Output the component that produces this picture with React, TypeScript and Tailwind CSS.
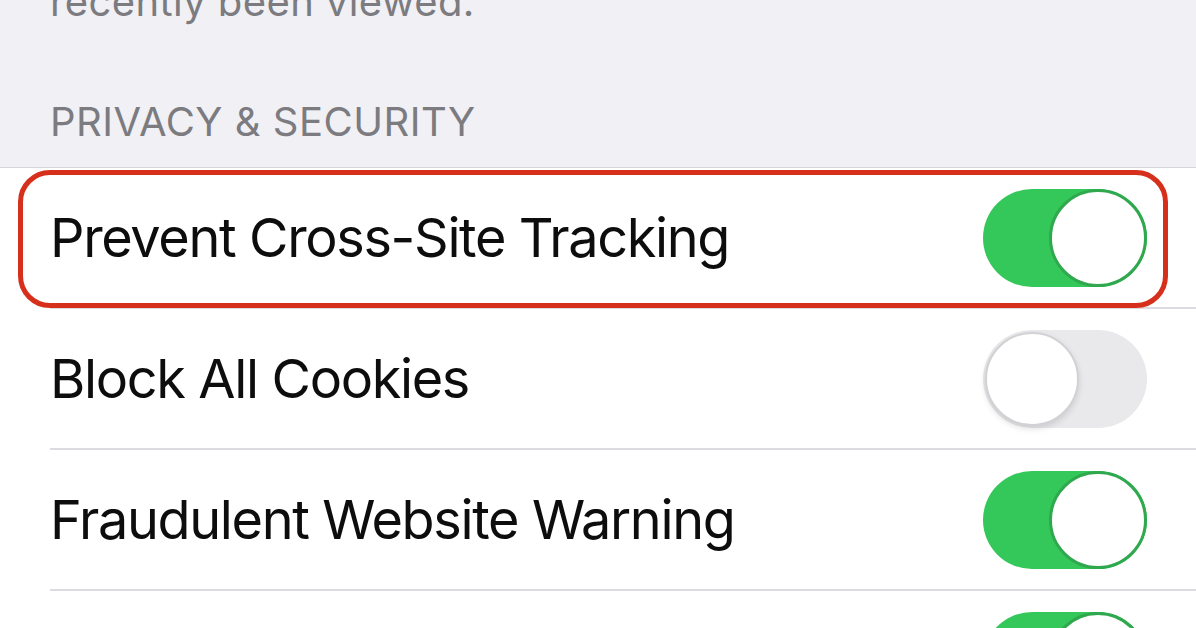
const font = { fontFamily: "Inter, 'Noto Sans', sans-serif" };

function Toggle({ on }: { on: boolean }) {
  if (on) {
    return (
      <div className="relative w-[164px] h-[98px] shrink-0 rounded-full bg-[#34c759]">
        <div className="absolute right-0 top-0 w-[98px] h-[98px] rounded-full bg-white border-[3px] border-[#2fa84e]" />
      </div>
    );
  }
  return (
    <div className="relative w-[164px] h-[98px] shrink-0 rounded-full bg-[#e9e9eb]">
      <div className="absolute left-[2px] top-[2px] w-[94px] h-[94px] rounded-full bg-white border-2 border-[#d2d2d6] shadow-[0_3px_6px_rgba(0,0,0,0.12)]" />
    </div>
  );
}

function Row({ label, on, highlight }: { label?: string; on: boolean; highlight?: boolean }) {
  return (
    <div className="relative pl-[50px]">
      <div className="flex items-center justify-between h-[141px] pr-[49px] border-b-[2px] border-[#dcdce0]">
        <span className="text-[54px] leading-none whitespace-nowrap text-[#0d0d0d] tracking-[-1.35px]">{label}</span>
        <Toggle on={on} />
      </div>
      {highlight && (
        <div className="absolute left-[18px] top-[2px] w-[1150px] h-[138px] rounded-[32px] border-[5px] border-[#d6301c]" />
      )}
    </div>
  );
}

export default function App() {
  return (
    <div className="w-[1196px] h-[628px] overflow-hidden bg-white" style={font}>
      <div className="h-[168px] bg-[#f1f0f5] px-[50px] border-b border-[#d6d6da] overflow-hidden">
        <p className="mt-[-18px] text-[40px] leading-none text-[#7b7b80] tracking-[0.4px]">recently been viewed.</p>
        <p className="mt-[80px] text-[40px] leading-none text-[#7b7b80] tracking-[0.5px]">PRIVACY &amp; SECURITY</p>
      </div>
      <Row label="Prevent Cross-Site Tracking" on highlight />
      <Row label="Block All Cookies" on={false} />
      <Row label="Fraudulent Website Warning" on />
      <Row on />
    </div>
  );
}
